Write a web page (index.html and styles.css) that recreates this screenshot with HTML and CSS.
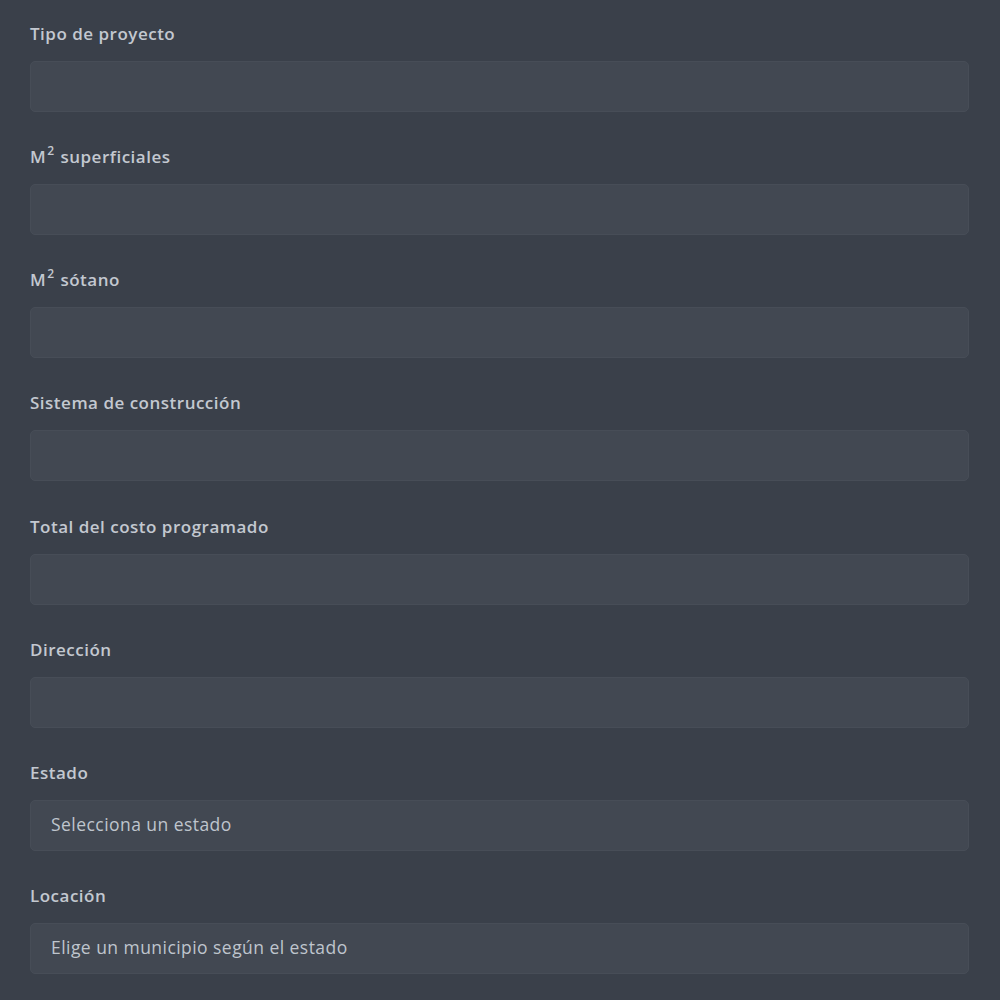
FILE: index.html
```html
<!DOCTYPE html>
<html lang="es">
<head>
<meta charset="utf-8">
<title>Proyecto</title>
<link rel="stylesheet" href="styles.css">
</head>
<body>
<form class="form">
  <div class="field">
    <label class="label">Tipo de proyecto</label>
    <input class="input" type="text">
  </div>
  <div class="field">
    <label class="label">M<sup>2</sup> superficiales</label>
    <input class="input" type="text">
  </div>
  <div class="field">
    <label class="label">M<sup>2</sup> sótano</label>
    <input class="input" type="text">
  </div>
  <div class="field">
    <label class="label">Sistema de construcción</label>
    <input class="input" type="text">
  </div>
  <div class="field">
    <label class="label">Total del costo programado</label>
    <input class="input" type="text">
  </div>
  <div class="field">
    <label class="label">Dirección</label>
    <input class="input" type="text">
  </div>
  <div class="field">
    <label class="label">Estado</label>
    <div class="input select">Selecciona un estado</div>
  </div>
  <div class="field">
    <label class="label">Locación</label>
    <div class="input select">Elige un municipio según el estado</div>
  </div>
</form>
</body>
</html>
```
FILE: styles.css
```css
html, body {
  margin: 0;
  padding: 0;
  background: #3a404a;
}
body {
  font-family: "Open Sans", "Noto Sans", sans-serif;
  height: 1000px;
  overflow: hidden;
}
.form {
  padding: 22px 31px 0 30px;
  display: flex;
  flex-direction: column;
}
.field {
  display: flex;
  flex-direction: column;
  margin-bottom: 33.15px;
}
.label {
  font-size: 17px;
  line-height: 24px;
  font-weight: 600;
  letter-spacing: 0.5px;
  color: #c3c8d0;
  margin-bottom: 15px;
}
.label sup {
  font-size: 12px;
  line-height: 0;
  vertical-align: 8px;
  margin-left: 1px;
  margin-right: 1px;
}
.input {
  box-sizing: border-box;
  height: 51px;
  width: 100%;
  background: #424852;
  border: 1px solid #474d57;
  border-radius: 5px;
  margin: 0;
  padding: 0 20px 2px;
  font-family: inherit;
  font-size: 17.5px;
  letter-spacing: 0.45px;
  color: #bfc5cd;
  outline: none;
}
.select {
  display: flex;
  align-items: center;
}
```
